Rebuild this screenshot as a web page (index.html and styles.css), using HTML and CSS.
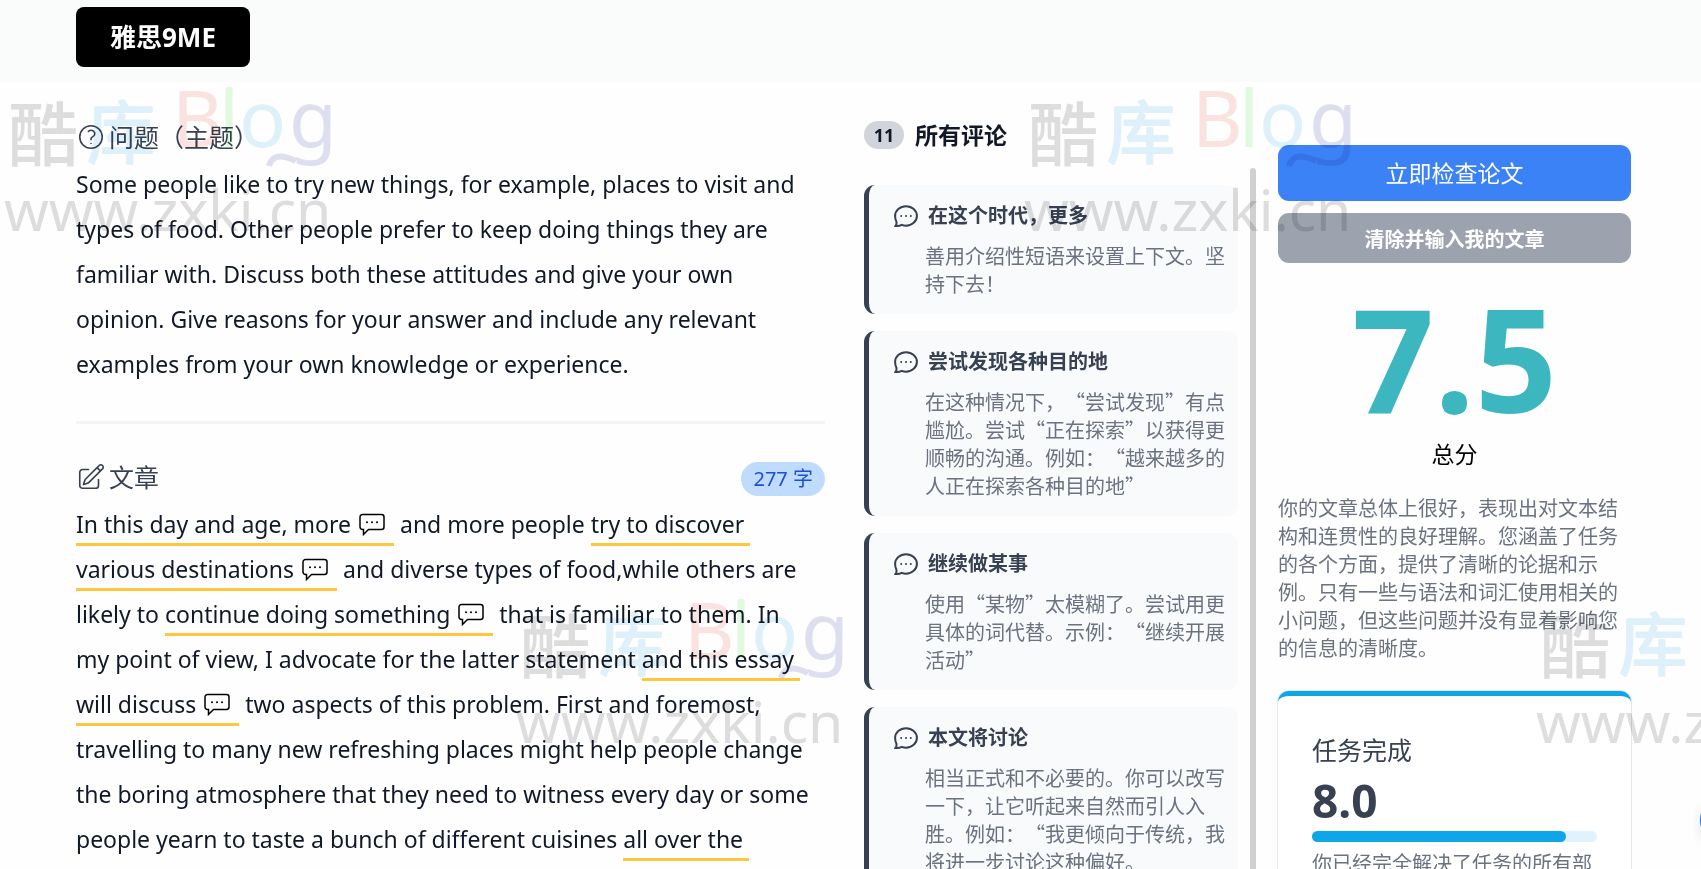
FILE: index.html
```html
<!doctype html>
<html lang="zh-CN">

<head>
  <meta charset="UTF-8" />
  <meta name="viewport" content="width=device-width, initial-scale=1.0" />
  <title>雅思9ME</title>
  <link rel="stylesheet" href="styles.css">
</head>

<body>
  <!-- shared icons -->
  <svg class="sprite" aria-hidden="true">
    <symbol id="icon-question" viewBox="0 0 24 24">
      <path d="M9.900 7.500c1.200-1 3-1 4.200 0s1.200 2.700 0 3.700c-.2.200-.4.300-.7.500-.7.400-1.400 1-1.400 1.800v.700M21 12a9 9 0 1 1-18 0 9 9 0 0 1 18 0Zm-9 5.200h.01v.01H12v-.01Z" />
    </symbol>
    <symbol id="icon-edit" viewBox="0 0 24 24">
      <path d="m16.862 4.487 1.687-1.688a1.875 1.875 0 1 1 2.652 2.652L10.582 16.070a4.500 4.500 0 0 1-1.897 1.130L6 18l.8-2.685a4.500 4.500 0 0 1 1.130-1.897l8.932-8.931Zm0 0L19.500 7.125M18 14v4.750A2.250 2.250 0 0 1 15.750 21H5.250A2.250 2.250 0 0 1 3 18.750V8.250A2.250 2.250 0 0 1 5.250 6H10" />
    </symbol>
    <symbol id="icon-bubble" viewBox="0 0 26 24">
      <path d="M3.500 1.500h19a2.500 2.500 0 0 1 2.500 2.500v10a2.500 2.500 0 0 1-2.500 2.500H9.500L4.500 21.500v-5h-1A2.500 2.500 0 0 1 1 14V4a2.500 2.500 0 0 1 2.500-2.500Z" />
      <path class="dots" d="M8 9.200h.01M13 9.200h.01M18 9.200h.01" />
    </symbol>
    <symbol id="icon-chat" viewBox="0 0 24 24">
      <path d="M12 2.200c6 0 10.900 4.200 10.900 9.700S18 21.700 12 21.700c-1.500 0-3-.3-4.300-.8-1.800 1-4 1.200-6.200 1 1.100-1.200 1.200-2.700.9-4.200C1.700 16 1.100 14 1.100 11.900 1.100 6.400 6 2.200 12 2.200Z" />
      <path class="dots" d="M7.200 12h.01M12 12h.01M16.800 12h.01" />
    </symbol>
  </svg>

  <header class="topbar">
    <a class="logo" href="#">雅思9ME</a>
  </header>

  <main class="layout">
    <div class="writing">
      <section class="topic">
        <h2 class="heading"><svg class="heading-icon"><use href="#icon-question" /></svg>问题（主题）</h2>
        <p class="prose">Some people like to try new things, for example, places to visit and types of food. Other people
          prefer to keep doing things they are familiar with. Discuss both these attitudes and give your own opinion.
          Give reasons for your answer and include any relevant examples from your own knowledge or experience.</p>
      </section>

      <section class="essay">
        <div class="essay-head">
          <h2 class="heading"><svg class="heading-icon"><use href="#icon-edit" /></svg>文章</h2>
          <span class="word-count">277 字</span>
        </div>
        <p class="prose"><span class="remark">In this day and age, more <svg class="bubble"><use href="#icon-bubble" /></svg></span>
          and more people <span class="remark">try to discover<br>various destinations <svg class="bubble"><use href="#icon-bubble" /></svg></span>
          and diverse types of food,while others are likely to <span class="remark">continue doing something <svg class="bubble"><use href="#icon-bubble" /></svg></span>
          that is familiar to them. In<br>my point of view, I advocate for the latter statement <span class="remark">and this essay<br>will discuss <svg class="bubble"><use href="#icon-bubble" /></svg></span>
          two aspects of this problem. First and foremost, travelling to many new refreshing places might help people
          change the boring atmosphere that they need to witness every day or some people yearn to taste a bunch of
          different cuisines <span class="remark">all over the</span></p>
      </section>
    </div>

    <section class="comments">
      <h2 class="comments-head"><span class="count">11</span>所有评论</h2>
      <div class="comments-body">
        <div class="comment-list">
          <article class="comment">
            <h3 class="comment-title"><svg class="chat"><use href="#icon-chat" /></svg>在这个时代，更多</h3>
            <p class="comment-text">善用介绍性短语来设置上下文。坚持下去！</p>
          </article>
          <article class="comment">
            <h3 class="comment-title"><svg class="chat"><use href="#icon-chat" /></svg>尝试发现各种目的地</h3>
            <p class="comment-text">在这种情况下，“尝试发现”有点尴尬。尝试“正在探索”以获得更顺畅的沟通。例如：“越来越多的人正在探索各种目的地”</p>
          </article>
          <article class="comment">
            <h3 class="comment-title"><svg class="chat"><use href="#icon-chat" /></svg>继续做某事</h3>
            <p class="comment-text">使用“某物”太模糊了。尝试用更具体的词代替。示例：“继续开展活动”</p>
          </article>
          <article class="comment">
            <h3 class="comment-title"><svg class="chat"><use href="#icon-chat" /></svg>本文将讨论</h3>
            <p class="comment-text">相当正式和不必要的。你可以改写一下，让它听起来自然而引人入胜。例如：“我更倾向于传统，我将进一步讨论这种偏好。</p>
          </article>
        </div>
        <div class="scroll-thumb"></div>
      </div>
    </section>

    <aside class="result">
      <button class="btn btn-primary" type="button">立即检查论文</button>
      <button class="btn btn-muted" type="button">清除并输入我的文章</button>
      <div class="score">7.5</div>
      <div class="score-label">总分</div>
      <p class="summary">你的文章总体上很好，表现出对文本结构和连贯性的良好理解。您涵盖了任务的各个方面，提供了清晰的论据和示例。只有一些与语法和词汇使用相关的小问题，但这些问题并没有显着影响您的信息的清晰度。</p>
      <section class="criterion">
        <h3 class="criterion-title">任务完成</h3>
        <div class="criterion-score">8.0</div>
        <div class="bar">
          <div class="bar-fill" style="width: 89%"></div>
        </div>
        <p class="criterion-text">你已经完全解决了任务的所有部</p>
      </section>
    </aside>
  </main>

  <div class="overlay">
    <button class="floating" type="button" aria-label="打开"></button>
    <svg class="marks" aria-hidden="true">
      <g id="mark">
        <text class="mark-cool" x="8" y="161">酷</text>
        <text class="mark-ku" x="87" y="158">库</text>
        <text class="mark-b" x="172" y="147">B</text>
        <text class="mark-l" x="219" y="147">l</text>
        <text class="mark-o" x="239" y="147">o</text>
        <text class="mark-g" x="289" y="147">g</text>
        <path class="mark-tail" d="M269 166c3-11 12-12 27-5" />
        <text class="mark-url" x="4" y="231">www.zxki.cn</text>
      </g>
      <use href="#mark" x="1020" />
      <use href="#mark" x="512" y="512" />
      <use href="#mark" x="1532" y="512" />
    </svg>
  </div>
</body>

</html>
```

FILE: styles.css
```css
* {
  box-sizing: border-box;
}

body {
  font-family: "Noto Sans", "Noto Sans CJK SC", sans-serif;
  background-color: #fefefe;
  color: #111827;
  margin: 0;
  height: 100vh;
  display: flex;
  flex-direction: column;
  position: relative;
  overflow: hidden;
  text-spacing-trim: space-all;
}

h2,
h3,
p {
  margin: 0;
}

.sprite {
  position: absolute;
  width: 0;
  height: 0;
}

.topbar {
  background-color: #fafcfb;
  padding: 7px 76px 15px;
  display: flex;
}

.logo {
  background-color: #000;
  color: #fff;
  font-size: 26px;
  font-weight: 700;
  line-height: 60px;
  padding: 0 34px;
  border-radius: 8px;
  text-decoration: none;
}

.layout {
  flex: 1;
  min-height: 0;
  display: grid;
  grid-template-columns: minmax(0, 749fr) minmax(0, 409fr) minmax(0, 353fr);
  column-gap: 22px;
  padding: 0 70px 0 76px;
  overflow: hidden;
}

/* question and essay */
.topic {
  padding: 36px 0 34px;
  border-bottom: 3px solid #f3f4f6;
}

.heading {
  display: flex;
  align-items: center;
  gap: 3px;
  font-size: 25px;
  font-weight: 400;
  line-height: 38px;
  color: #374151;
}

.heading-icon {
  width: 30px;
  height: 30px;
  fill: none;
  stroke: currentColor;
  stroke-width: 1.3;
  stroke-linecap: round;
  stroke-linejoin: round;
}

.prose {
  font-size: 23px;
  line-height: 45px;
  margin-top: 6px;
}

.essay-head {
  display: flex;
  justify-content: space-between;
  align-items: flex-end;
  padding-top: 34px;
}

.word-count {
  background-color: #bfdbfe;
  color: #1d4ed8;
  font-size: 20px;
  line-height: 34px;
  padding: 0 12px;
  border-radius: 17px;
}

.remark {
  border-bottom: 3px solid #ffc53d;
  padding: 0 6px 3px 0;
  box-decoration-break: clone;
  -webkit-box-decoration-break: clone;
}

.bubble {
  width: 26px;
  height: 24px;
  margin: 0 3px 0 2px;
  vertical-align: -4px;
  fill: none;
  stroke: #000;
  stroke-width: 1.5;
  stroke-linecap: round;
}

.dots {
  stroke-width: 2;
  stroke-linecap: round;
}

/* comments */
.comments {
  display: flex;
  flex-direction: column;
  min-height: 0;
  margin-left: 17px;
  padding-top: 36px;
}

.comments-head {
  display: flex;
  align-items: center;
  gap: 11px;
  font-size: 23px;
  line-height: 34px;
}

.count {
  background-color: #d1d5db;
  font-size: 18px;
  line-height: 28px;
  width: 40px;
  text-align: center;
  border-radius: 14px;
}

.comments-body {
  display: flex;
  gap: 12px;
  flex: 1;
  min-height: 0;
  margin-top: 16px;
  overflow: hidden;
}

.comment-list {
  flex: 1;
  padding-top: 17px;
  display: flex;
  flex-direction: column;
  gap: 17px;
}

.scroll-thumb {
  width: 6px;
  background-color: #d0d0d0;
  border-radius: 3px 3px 0 0;
}

.comment {
  flex-shrink: 0;
  background-color: #f9fafc;
  border-left: 5px solid #374151;
  border-radius: 11px;
  padding: 17px 12px 16px 25px;
}

.comment-title {
  display: flex;
  align-items: center;
  gap: 10px;
  font-size: 20px;
  line-height: 28px;
  color: #374151;
}

.chat {
  width: 24px;
  height: 24px;
  fill: none;
  stroke: currentColor;
  stroke-width: 2;
}

.comment-text {
  font-family: "Noto Sans CJK SC", sans-serif;
  font-size: 20px;
  line-height: 28px;
  color: #6b7280;
  margin-top: 12px;
  padding-left: 31px;
}

/* result column */
.result {
  padding-top: 63px;
}

.btn {
  display: block;
  width: 100%;
  border: 0;
  border-radius: 11px;
  color: #fff;
  font-family: inherit;
}

.btn-primary {
  background-color: #3b82f6;
  font-size: 23px;
  height: 56px;
  padding-bottom: 3px;
}

.btn-muted {
  background-color: #9ca3af;
  font-size: 20px;
  font-weight: 700;
  height: 50px;
  margin-top: 12px;
}

.score {
  color: #3cb7bf;
  font-size: 144px;
  font-weight: 700;
  line-height: 144px;
  text-align: center;
  margin-top: 22px;
}

.score-label {
  color: #000;
  font-size: 23px;
  line-height: 34px;
  text-align: center;
  margin-top: 8px;
}

.summary,
.criterion-text {
  font-size: 20px;
  line-height: 28px;
  color: #6b7280;
}

.summary {
  margin-top: 24px;
}

.criterion {
  margin-top: 28px;
  padding: 37px 34px;
  border-top: 5px solid #0ea5e9;
  border-radius: 11px;
  background-color: #fff;
  box-shadow: 0 0 0 1px #e5e7eb;
}

.criterion-title {
  font-size: 25px;
  font-weight: 400;
  line-height: 34px;
  color: #374151;
}

.criterion-score {
  font-size: 46px;
  font-weight: 700;
  line-height: 50px;
  color: #374151;
  margin-top: 8px;
}

.bar {
  height: 11px;
  margin: 6px 0 8px;
  border-radius: 6px;
  background-color: #e0f2fe;
}

.bar-fill {
  height: 100%;
  border-radius: 6px;
  background-color: #0ea5e9;
}

.criterion-text {
  white-space: nowrap;
}

/* floating button and watermark */
.overlay {
  position: absolute;
  inset: 0;
  overflow: hidden;
  pointer-events: none;
  mix-blend-mode: multiply;
}

.floating {
  position: absolute;
  right: -49px;
  bottom: 24px;
  width: 50px;
  height: 50px;
  border: 0;
  border-radius: 50%;
  background-color: #1677ff;
  box-shadow: 0 4px 12px rgba(0, 0, 0, 0.1);
  pointer-events: auto;
}

.marks {
  display: block;
  width: 100%;
  height: 100%;
}

.mark-cool,
.mark-ku {
  font-family: "Noto Sans CJK SC", sans-serif;
  font-size: 70px;
}

.mark-cool {
  font-weight: 500;
  fill: #dedede;
}

.mark-ku {
  font-size: 68px;
  font-weight: 400;
  fill: #dff1fa;
  stroke: #dff1fa;
  stroke-width: 2;
  stroke-linejoin: round;
}

.mark-b,
.mark-l,
.mark-o,
.mark-g {
  font-family: "Noto Sans", sans-serif;
  font-size: 78px;
}

.mark-b {
  fill: #fbe3df;
}

.mark-l {
  fill: #e2fbe0;
}

.mark-o {
  fill: #dff1fa;
}

.mark-g {
  fill: #dfe0ef;
}

.mark-tail {
  fill: none;
  stroke: #dfe0ef;
  stroke-width: 6;
}

.mark-url {
  font-family: "Noto Sans", sans-serif;
  font-size: 57px;
  fill: #dedede;
}
```
